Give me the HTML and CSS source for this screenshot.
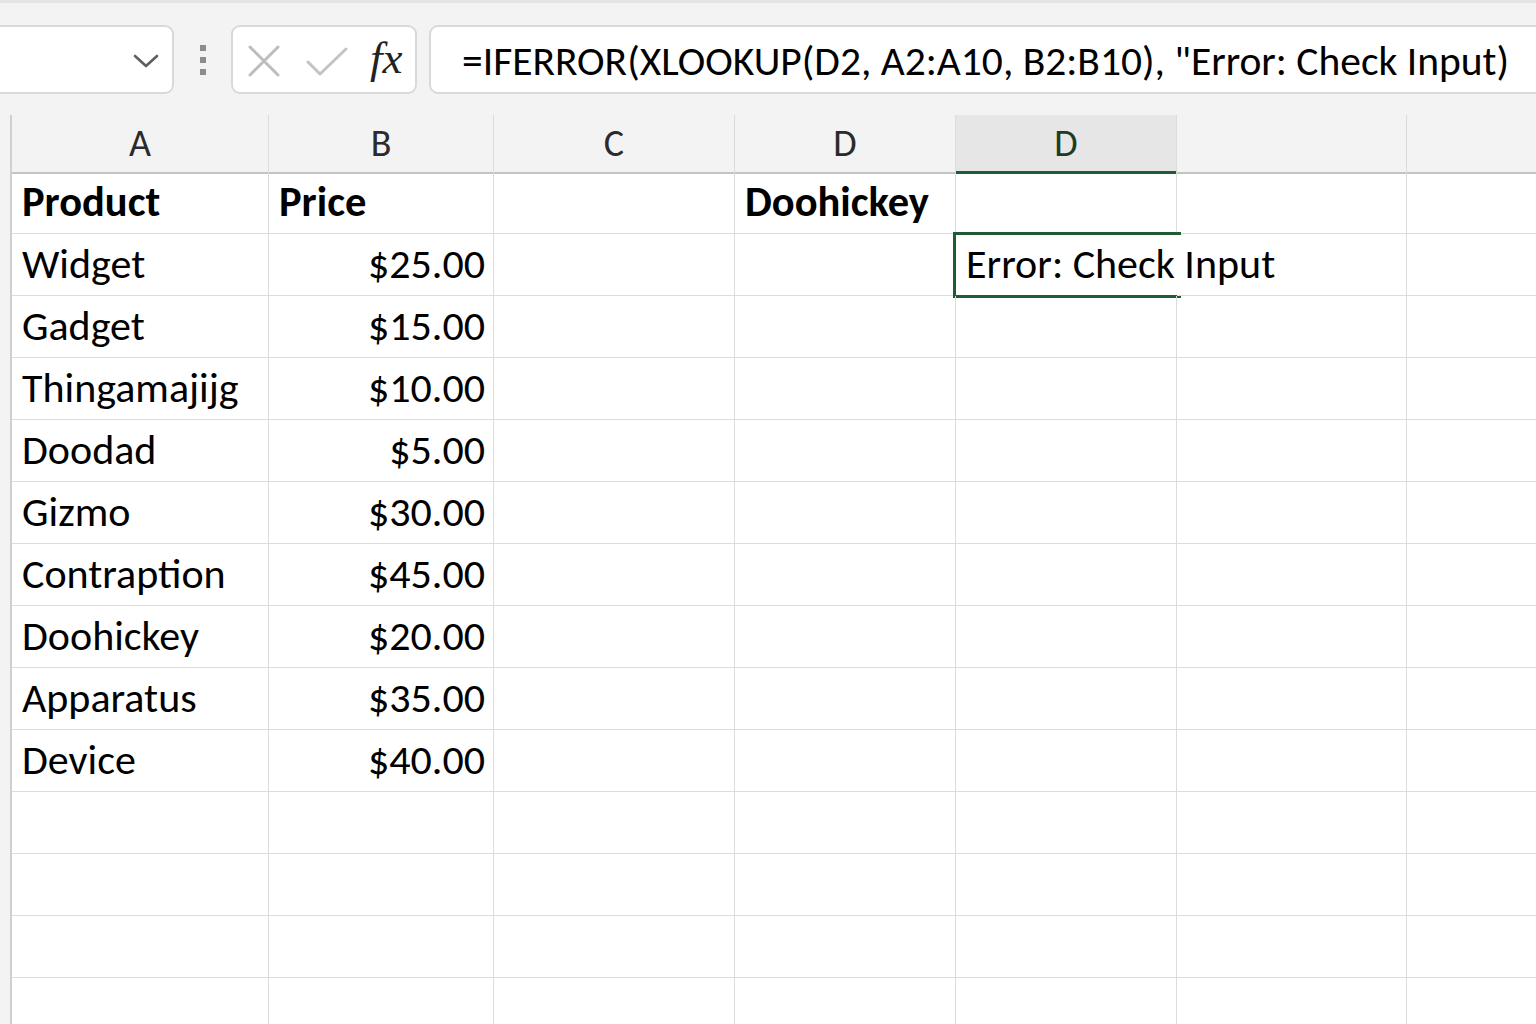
FILE: index.html
```html
<!DOCTYPE html>
<html lang="en">
<head>
    <meta charset="UTF-8">
    <meta name="viewport" content="width=device-width, initial-scale=1.0">
    <title>XLOOKUP Sheet</title>
    <link rel="stylesheet" href="styles.css">
</head>
<body>
    <div class="formula-bar">
        <div class="name-box">
            <svg class="chevron" width="28" height="16" viewBox="0 0 28 16">
                <path d="M3 3 L14 13 L25 3" fill="none" stroke="#5f5f5f" stroke-width="2.6" stroke-linecap="round" stroke-linejoin="round"/>
            </svg>
        </div>
        <div class="grip">
            <span></span><span></span><span></span>
        </div>
        <div class="edit-buttons">
            <svg class="icon-cancel" width="32" height="32" viewBox="0 0 32 32">
                <path d="M2 2 L30 30 M30 2 L2 30" fill="none" stroke="#bdbdbd" stroke-width="3" stroke-linecap="round"/>
            </svg>
            <svg class="icon-enter" width="42" height="30" viewBox="0 0 42 30">
                <path d="M2 15 L14 27 L40 2" fill="none" stroke="#c4c4c4" stroke-width="3" stroke-linecap="round" stroke-linejoin="round"/>
            </svg>
            <span class="fx">fx</span>
        </div>
        <div class="formula-input">=IFERROR(XLOOKUP(D2, A2:A10, B2:B10), "Error: Check Input)</div>
    </div>

    <div class="sheet" id="sheet">
        <div class="row header-row">
            <div class="corner"></div>
            <div class="col-head">A</div>
            <div class="col-head">B</div>
            <div class="col-head">C</div>
            <div class="col-head">D</div>
            <div class="col-head selected">D</div>
            <div class="col-head"></div>
            <div class="col-head last"></div>
        </div>
        <!-- rows go here -->
    </div>

    <script>
        const sheet = document.getElementById('sheet');

        const rows = [
            ['Product', 'Price', '', 'Doohickey', ''],
            ['Widget', '$25.00', '', '', 'Error: Check Input'],
            ['Gadget', '$15.00'],
            ['Thingamajijg', '$10.00'],
            ['Doodad', '$5.00'],
            ['Gizmo', '$30.00'],
            ['Contraption', '$45.00'],
            ['Doohickey', '$20.00'],
            ['Apparatus', '$35.00'],
            ['Device', '$40.00'],
            [], [], [], []
        ];

        rows.forEach((data, r) => {
            let html = '<div class="row"><div class="row-head"></div>';
            for (let c = 0; c < 7; c++) {
                const value = data[c] || '';
                let cls = 'cell';
                if (r === 0 && value) cls += ' bold';
                if (c === 1 && r > 0) cls += ' num';
                if (r === 1 && c === 4) cls += ' active';
                if (c === 6) cls += ' last';
                html += `<div class="${cls}">${value}</div>`;
            }
            html += '</div>';
            sheet.insertAdjacentHTML('beforeend', html);
        });
    </script>
</body>
</html>
```

FILE: styles.css
```css
body {
    margin: 0;
    padding: 0;
    background-color: #fff;
    font-family: Carlito, Calibri, Lato, "Liberation Sans", sans-serif;
    color: #000;
    overflow: hidden;
    height: 1024px;
}

.formula-bar {
    display: flex;
    align-items: center;
    height: 115px;
    background-color: #f3f3f3;
    border-top: 3px solid #e4e4e4;
    box-sizing: border-box;
    overflow: hidden;
}

.name-box {
    width: 194px;
    height: 69px;
    margin-left: -20px;
    background-color: #fff;
    border: 2px solid #d9d9d9;
    border-radius: 9px;
    box-sizing: border-box;
    display: flex;
    align-items: center;
    justify-content: flex-end;
    padding-right: 12px;
    flex-shrink: 0;
}

.chevron {
    margin-top: 4px;
}

.grip {
    display: flex;
    flex-direction: column;
    gap: 6px;
    margin-left: 26px;
    margin-top: 2px;
    flex-shrink: 0;
}

.grip span {
    display: block;
    width: 6px;
    height: 6px;
    background-color: #8c8c8c;
}

.edit-buttons {
    display: flex;
    align-items: center;
    width: 186px;
    height: 69px;
    margin-left: 25px;
    background-color: #fff;
    border: 2px solid #d9d9d9;
    border-radius: 9px;
    box-sizing: border-box;
    flex-shrink: 0;
}

.icon-cancel {
    margin-left: 15px;
    margin-top: 4px;
}

.icon-enter {
    margin-left: 26px;
    margin-top: 6px;
}

.fx {
    margin-left: 22px;
    font-family: "Liberation Serif", serif;
    font-style: italic;
    font-size: 45px;
    color: #222;
    line-height: 1;
    margin-top: -2px;
}

.formula-input {
    flex: 1;
    height: 69px;
    margin-left: 12px;
    margin-right: -20px;
    background-color: #fff;
    border: 2px solid #d9d9d9;
    border-radius: 9px;
    box-sizing: border-box;
    padding-left: 31px;
    font-size: 41.5px;
    line-height: 68px;
    white-space: nowrap;
    overflow: hidden;
}

.row {
    display: grid;
    grid-template-columns: 12px 257px 225px 241px 221px 221px 230px 1fr;
    height: 62px;
}

.header-row {
    height: 57px;
    background-color: #f3f3f3;
}

.corner,
.row-head {
    background-color: #f3f3f3;
    border-right: 2px solid #cfcfcf;
}

.corner {
    border-bottom: 2px solid #c4c4c4;
}

.col-head {
    border-right: 1px solid #dcdcdc;
    border-bottom: 2px solid #c4c4c4;
    text-align: center;
    font-size: 38px;
    line-height: 56px;
    color: #2b2b2b;
}

.col-head.selected {
    background-color: #e6e6e6;
    border-bottom: 3px solid #1e5c36;
    color: #1e3b26;
}

.col-head.last,
.cell.last {
    border-right: none;
}

.cell {
    border-right: 1px solid #dcdcdc;
    border-bottom: 1px solid #dcdcdc;
    padding: 0 8px 0 10px;
    font-size: 42px;
    line-height: 59px;
    white-space: nowrap;
    position: relative;
}

.cell.bold {
    font-weight: bold;
    font-size: 42.5px;
}

.cell.num {
    text-align: right;
}

.cell.active {
    border-right-color: transparent;
    overflow: visible;
}

.cell.active::before {
    content: "";
    position: absolute;
    left: -3px;
    top: -2px;
    right: -5px;
    bottom: -3px;
    border: 3px solid #1f5c36;
    border-right: none;
}
```
